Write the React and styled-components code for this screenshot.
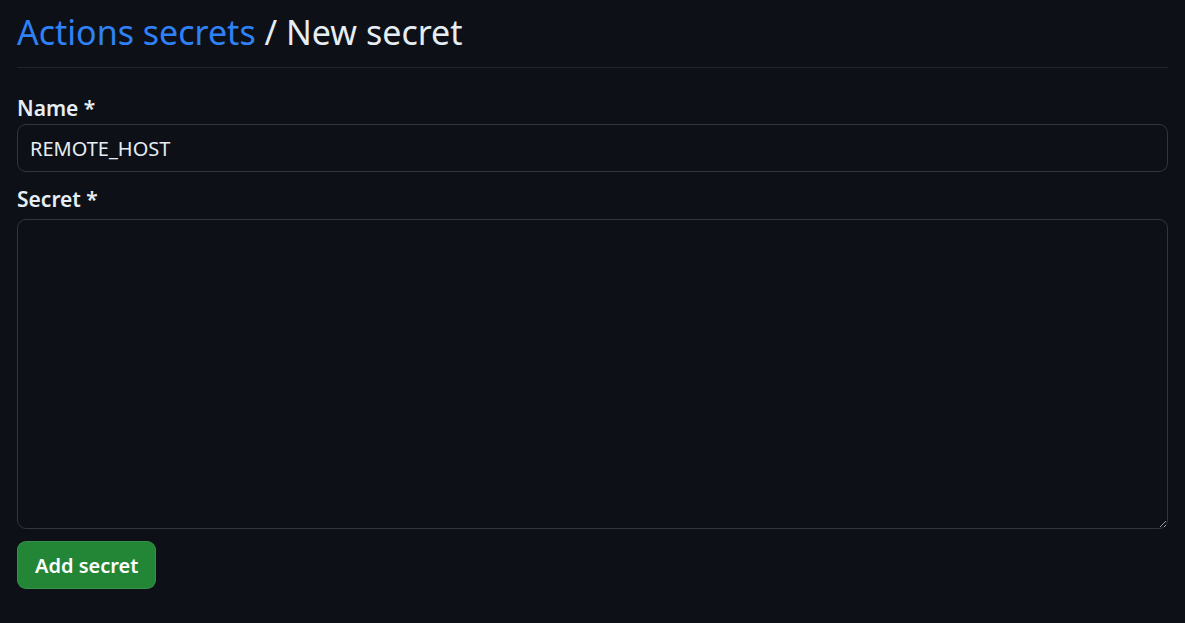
import React from 'react';
import styled, { createGlobalStyle } from 'styled-components';

const GlobalStyle = createGlobalStyle`
    html, body {
        margin: 0;
        background: #0d1117;
        color: #e6edf3;
        color-scheme: dark;
        font-family: "Noto Sans", "Open Sans", sans-serif;
    }
`;

const Wrapper = styled.div`
    padding: 0 17px;
`;

const Subhead = styled.div`
    padding: 10px 0 13px;
    border-bottom: 1px solid #21262d;
    margin-bottom: 27px;
`;

const Heading = styled.h2`
    margin: 0;
    font-size: 34px;
    font-weight: 400;
    line-height: 44px;
    color: #e6edf3;
`;

const Crumb = styled.a`
    color: #2f81f7;
    text-decoration: none;
`;

const Form = styled.form`
    display: flex;
    flex-direction: column;
`;

const Field = styled.div`
    display: flex;
    flex-direction: column;
    margin-bottom: ${props => props.gap}px;
`;

const Label = styled.label`
    font-size: 21px;
    font-weight: 600;
    line-height: 26px;
    margin-bottom: ${props => props.space}px;
`;

const Input = styled.input`
    box-sizing: border-box;
    height: 48px;
    padding: 0 12px;
    font: inherit;
    font-size: 20px;
    color: #e6edf3;
    background: #0d1117;
    border: 1px solid #30363d;
    border-radius: 9px;
    outline: none;
`;

const TextArea = styled.textarea`
    box-sizing: border-box;
    height: 310px;
    padding: 12px;
    font: inherit;
    font-size: 20px;
    color: #e6edf3;
    background: #0d1117;
    border: 1px solid #30363d;
    border-radius: 9px;
    outline: none;
    resize: vertical;
`;

const Button = styled.button`
    align-self: flex-start;
    height: 48px;
    padding: 0 17px;
    font: inherit;
    font-size: 20px;
    font-weight: 600;
    color: #ffffff;
    background: #238636;
    border: 1px solid rgba(240, 246, 252, 0.1);
    border-radius: 9px;
    cursor: pointer;
`;

export default function App() {
    return (
        <Wrapper>
            <GlobalStyle />
            <Subhead>
                <Heading>
                    <Crumb href="#">Actions secrets</Crumb> / New secret
                </Heading>
            </Subhead>
            <Form onSubmit={e => e.preventDefault()}>
                <Field gap={14}>
                    <Label htmlFor="name" space={3}>Name *</Label>
                    <Input id="name" defaultValue="REMOTE_HOST" />
                </Field>
                <Field gap={12}>
                    <Label htmlFor="secret" space={7}>Secret *</Label>
                    <TextArea id="secret" />
                </Field>
                <Button type="submit">Add secret</Button>
            </Form>
        </Wrapper>
    );
}
